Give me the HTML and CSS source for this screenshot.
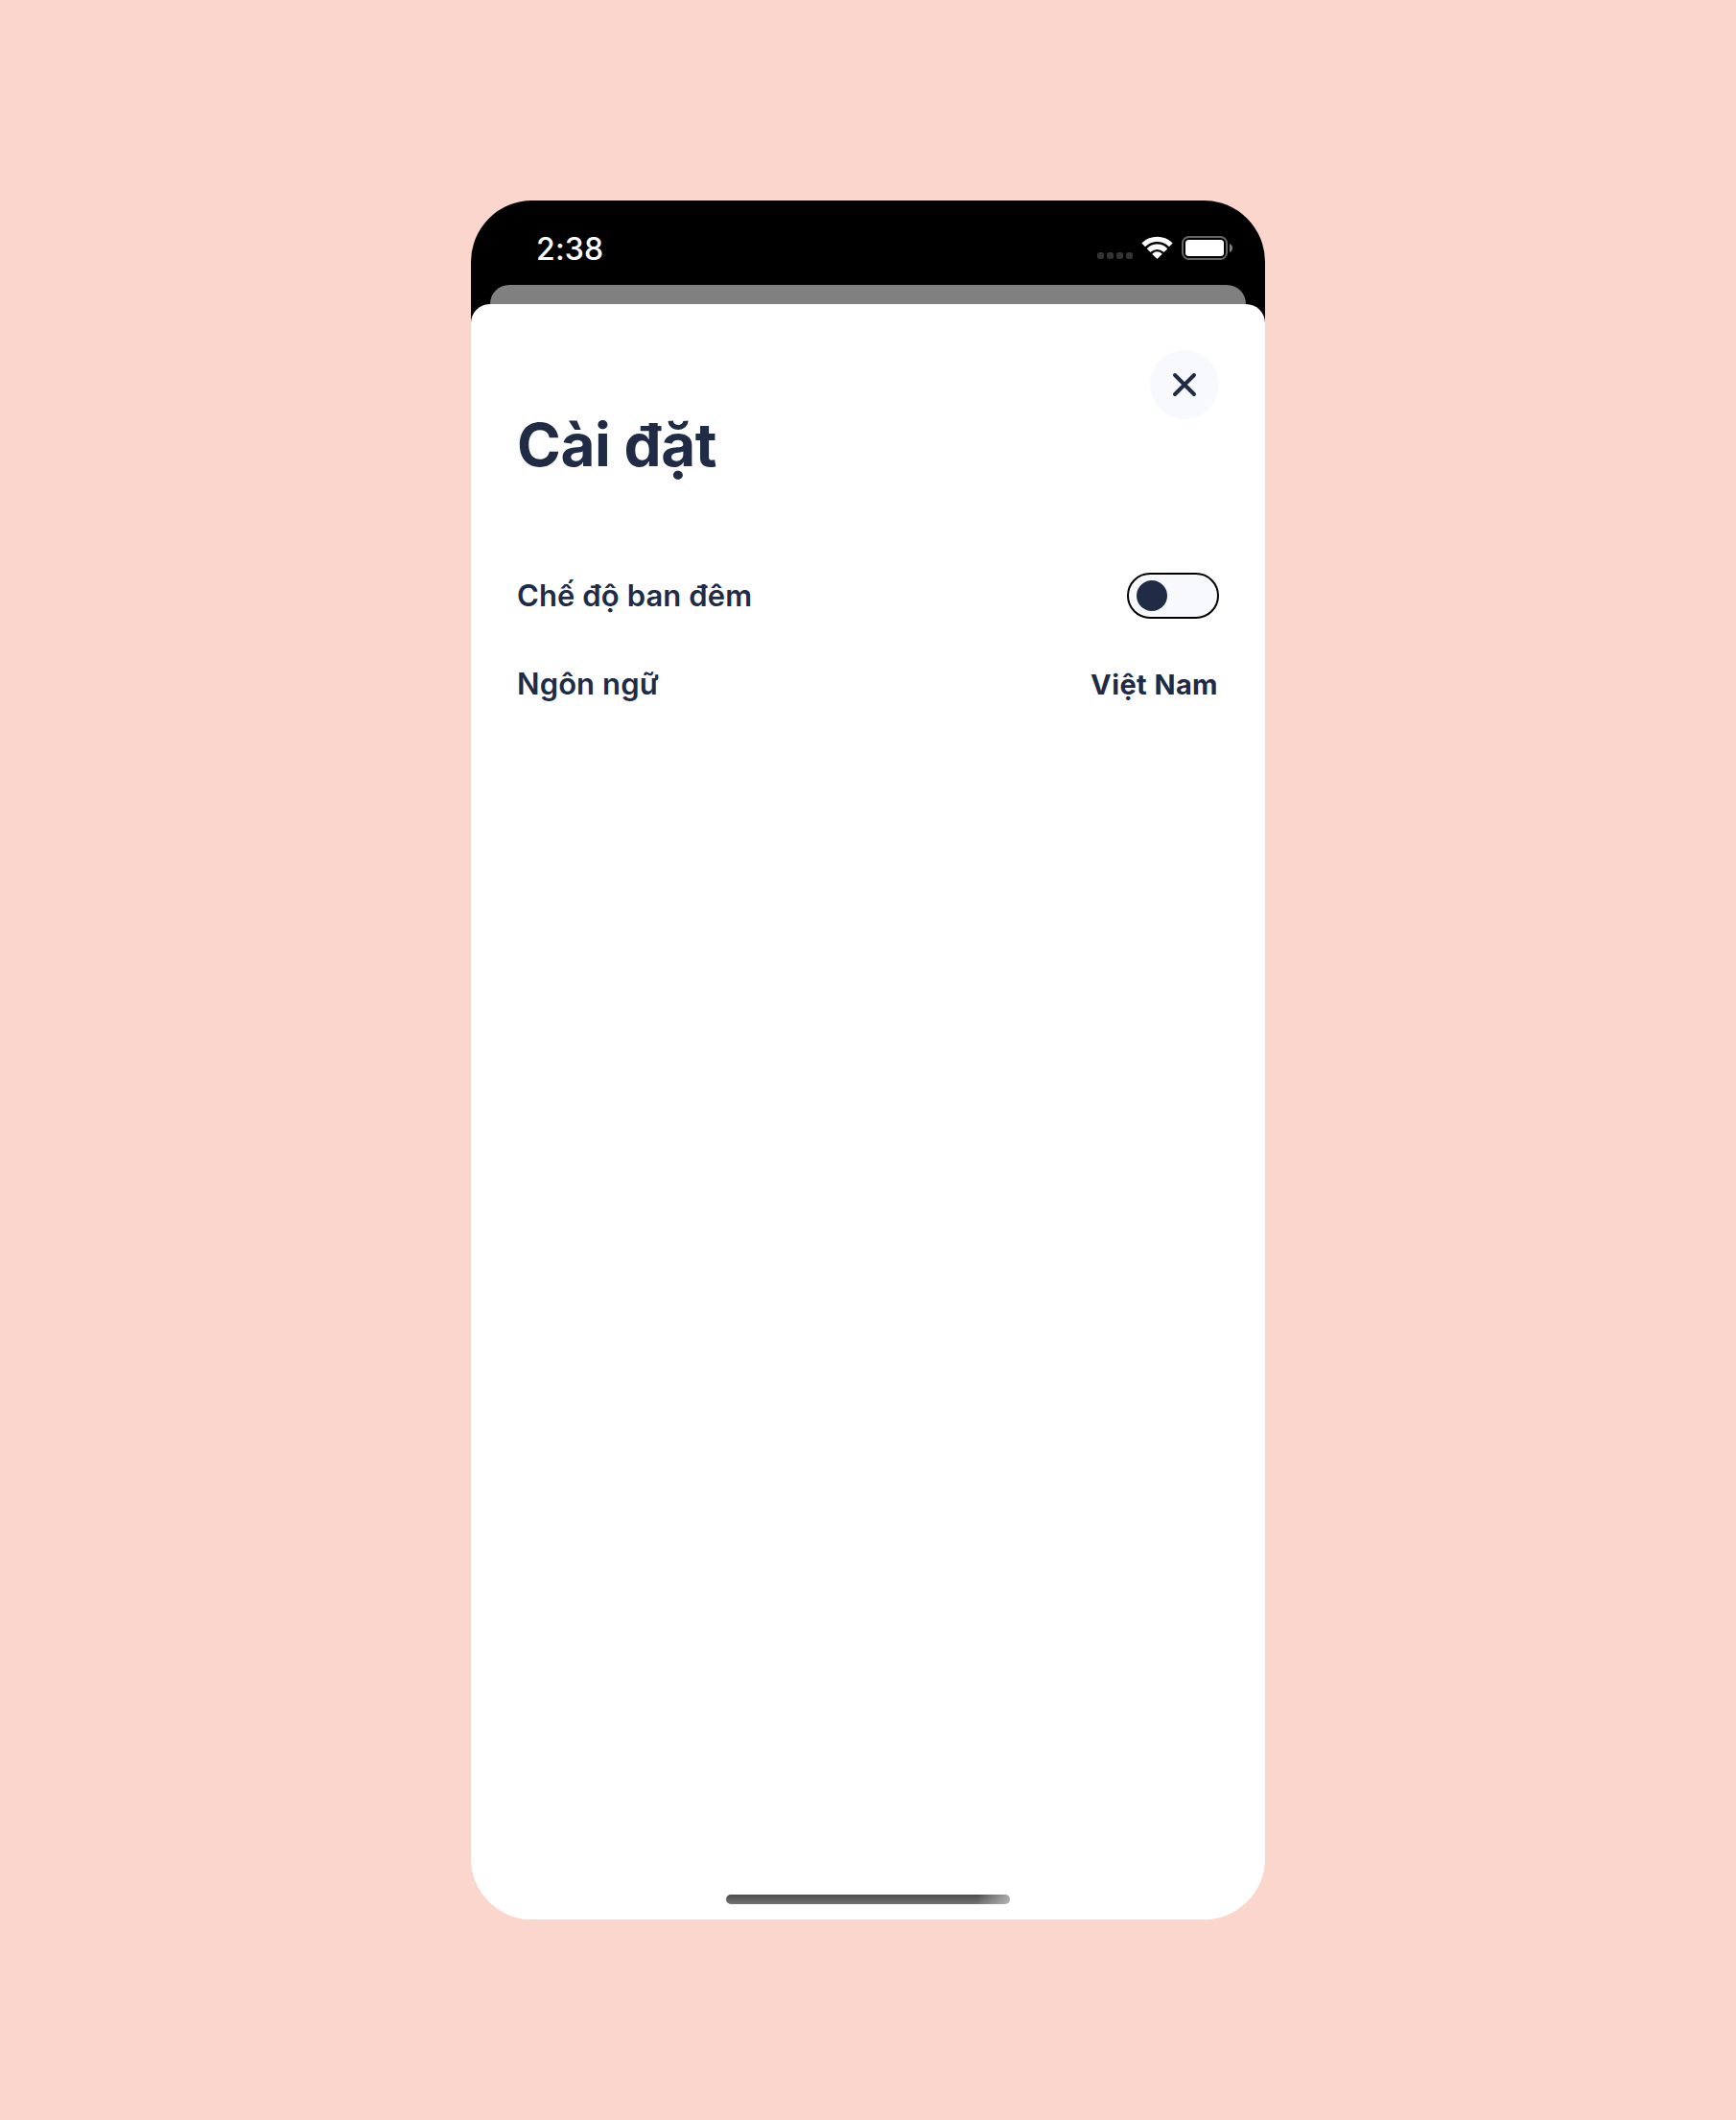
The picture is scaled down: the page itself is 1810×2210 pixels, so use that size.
FILE: index.html
```html
<!DOCTYPE html>
<html lang="vi">
<head>
<meta charset="utf-8">
<title>Cài đặt</title>
<link rel="stylesheet" href="styles.css">
</head>
<body>
<main class="phone">
  <header class="status">
    <span class="time">2:38</span>
    <svg class="indicators" width="142" height="26" viewBox="0 0 142 26">
      <g fill="#333">
        <rect x="0" y="17" width="7" height="7" rx="2.5"/>
        <rect x="10" y="17" width="7" height="7" rx="2.5"/>
        <rect x="20" y="17" width="7" height="7" rx="2.5"/>
        <rect x="30" y="17" width="7" height="7" rx="2.5"/>
      </g>
      <g fill="#fff">
        <path d="M46.8 7.1 Q46.3 7.6 46.8 8.1 L49.6 10.8 Q50.1 11.2 50.6 10.7 A17.4 17.4 0 0 1 74.4 10.7 Q74.9 11.2 75.4 10.8 L78.2 8.1 Q78.7 7.6 78.2 7.1 A22.5 22.5 0 0 0 46.8 7.1Z"/>
        <path d="M52.2 12.7 Q51.7 13.2 52.2 13.7 L55 16.5 Q55.5 16.9 56 16.5 A9.6 9.6 0 0 1 69 16.5 Q69.5 16.9 70 16.5 L72.8 13.7 Q73.3 13.2 72.8 12.7 A14.8 14.8 0 0 0 52.2 12.7Z"/>
        <path d="M57.7 18.2 Q57.2 18.8 57.7 19.3 L62 23.5 Q62.5 23.9 63 23.5 L67.3 19.3 Q67.8 18.8 67.3 18.2 A7.2 7.2 0 0 0 57.7 18.2Z"/>
      </g>
      <rect x="89" y="1" width="46" height="23" rx="6.5" fill="none" stroke="#666" stroke-width="2"/>
      <rect x="92" y="4" width="40" height="17" rx="3.5" fill="#fff"/>
      <path d="M138 8 Q141 9.5 141 12.5 Q141 15.5 138 17Z" fill="#808080"/>
    </svg>
  </header>
  <div class="behind"></div>
  <section class="sheet">
    <button class="close" aria-label="Đóng">
      <svg width="28" height="28" viewBox="0 0 28 28"><path d="M4 4 24 24M24 4 4 24" stroke="#202b46" stroke-width="4" stroke-linecap="round"/></svg>
    </button>
    <h1 class="title">Cài đặt</h1>
    <div class="rows">
      <div class="row">
        <span class="label mode">Chế độ ban đêm</span>
        <span class="toggle"><span class="knob"></span></span>
      </div>
      <div class="row">
        <span class="label language">Ngôn ngữ</span>
        <span class="value">Việt Nam</span>
      </div>
    </div>
    <div class="home"></div>
  </section>
</main>
</body>
</html>
```
FILE: styles.css
```css
* { box-sizing: border-box; }
body {
  margin: 0;
  height: 2210px;
  padding-top: 209px;
  background: #fbd6cd;
  font-family: Inter, "Liberation Sans", sans-serif;
  color: #202b46;
}
.phone {
  display: flex;
  flex-direction: column;
  width: 828px;
  height: 1792px;
  margin: 0 auto;
  border-radius: 64px;
  overflow: hidden;
  background: linear-gradient(#000 200px, #fff 200px);
}
.status {
  display: flex;
  justify-content: space-between;
  height: 88px;
  padding: 37px 33px 0 68px;
  color: #fff;
}
.time {
  margin-top: 1px;
  font-size: 32px;
  font-weight: 540;
  line-height: 25px;
  letter-spacing: .2px;
}
.behind {
  height: 20px;
  margin: 0 20px;
  border-radius: 20px 20px 0 0;
  background: #808080;
}
.sheet {
  display: flex;
  flex: 1;
  flex-direction: column;
  padding: 48px 48px 16px;
  border-radius: 20px 20px 0 0;
  background: #fff;
}
.close {
  display: flex;
  align-items: center;
  justify-content: center;
  align-self: flex-end;
  width: 72px;
  height: 72px;
  padding: 0;
  border: 0;
  border-radius: 50%;
  background: #f7f9fd;
}
.title {
  height: 72px;
  margin: 1px 0 0;
  font-size: 62px;
  font-weight: 700;
  line-height: 51px;
  letter-spacing: -.45px;
  overflow: hidden;
}
.rows {
  display: flex;
  flex-direction: column;
  gap: 49px;
  margin-top: 87px;
}
.row {
  display: flex;
  align-items: center;
  justify-content: space-between;
  line-height: 38px;
}
.label {
  font-size: 31px;
  font-weight: 560;
  letter-spacing: .1px;
}
.value {
  margin-bottom: -2px;
  font-size: 29px;
  font-weight: 660;
  letter-spacing: .4px;
  margin-right: 1px;
}
.toggle {
  display: flex;
  align-items: center;
  width: 96px;
  height: 48px;
  padding-left: 8px;
  border: 2px solid #000;
  border-radius: 24px;
  background: #f7f9fd;
}
.knob {
  width: 32px;
  height: 32px;
  border-radius: 50%;
  background: #202b46;
}
.home {
  width: 296px;
  height: 10px;
  margin: auto auto 0;
  border-radius: 5px;
  background:
    linear-gradient(100deg, transparent 88%, rgba(190, 190, 190, .85) 100%),
    linear-gradient(#4c4c4c, #747474);
}
```
